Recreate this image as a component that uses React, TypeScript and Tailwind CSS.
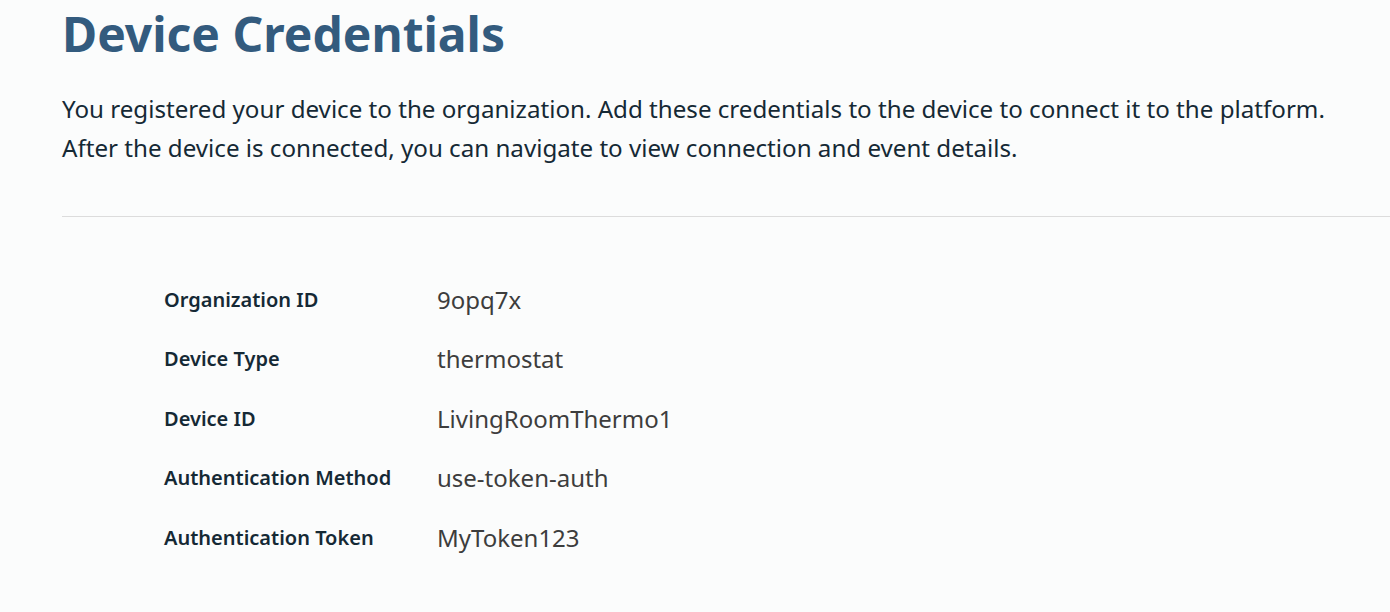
const rows = [
  { label: 'Organization ID', value: '9opq7x' },
  { label: 'Device Type', value: 'thermostat' },
  { label: 'Device ID', value: 'LivingRoomThermo1' },
  { label: 'Authentication Method', value: 'use-token-auth' },
  { label: 'Authentication Token', value: 'MyToken123' },
];

export default function App() {
  return (
    <div
      className="min-h-[612px] w-full overflow-hidden bg-[#fbfcfc] pl-[62px]"
      style={{ fontFamily: '"Noto Sans", "Open Sans", sans-serif' }}
    >
      {/* Header */}
      <h1 className="pt-[2px] text-[48px] font-bold leading-[64px] text-[#335b7e]">
        Device Credentials
      </h1>
      <p className="mt-[23px] whitespace-nowrap text-[24.15px] leading-[39px] text-[#152935]">
        You registered your device to the organization. Add these credentials to the device to connect it to the platform.
        <br />
        After the device is connected, you can navigate to view connection and event details.
      </p>

      <div className="mt-[49px] h-px bg-[#dcdcdc]" />

      {/* Credentials */}
      <div className="pl-[102px] pt-[53px]">
        {rows.map((row) => (
          <div key={row.label} className="flex h-[59.5px] items-center">
            <span className="w-[273px] text-[20px] font-semibold text-[#152935]">{row.label}</span>
            <span className="text-[24px] text-[#3d3d3d]">{row.value}</span>
          </div>
        ))}
      </div>
    </div>
  );
}
